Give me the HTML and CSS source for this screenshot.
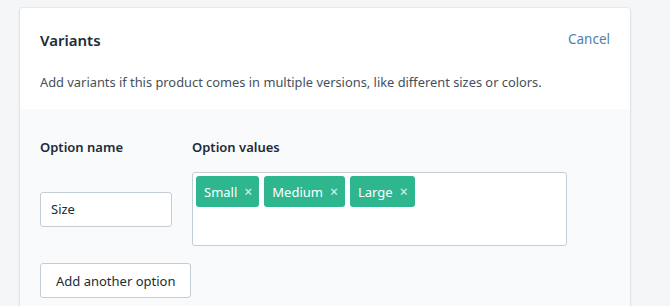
FILE: index.html
```html
<!DOCTYPE html>
<html lang="en">
<head>
    <meta charset="UTF-8">
    <title>Variants</title>
    <link rel="stylesheet" href="styles.css">
</head>
<body>
    <div class="card">
        <div class="card-header">
            <div class="title-row">
                <h2 class="title">Variants</h2>
                <a href="#" class="cancel">Cancel</a>
            </div>
            <p class="help">Add variants if this product comes in multiple versions, like different sizes or colors.</p>
        </div>
        <div class="card-section">
            <div class="options">
                <label class="label">Option name</label>
                <label class="label">Option values</label>
                <input class="name-input" type="text" value="Size">
                <div class="values-box">
                    <span class="tag">Small <span class="remove">&times;</span></span>
                    <span class="tag">Medium <span class="remove">&times;</span></span>
                    <span class="tag">Large <span class="remove">&times;</span></span>
                </div>
            </div>
            <button class="add-btn">Add another option</button>
        </div>
    </div>
</body>
</html>
```

FILE: styles.css
```css
body {
    margin: 0;
    padding: 8px 40px 0 20px;
    background-color: #f4f6f8;
    font-family: "Noto Sans", "Open Sans", sans-serif;
    font-size: 13px;
    color: #212b36;
    height: 306px;
    box-sizing: border-box;
    overflow: hidden;
}

.card {
    width: 610px;
    background-color: #fff;
    border-radius: 3px;
    box-shadow: 0 0 0 1px rgba(63, 63, 68, 0.05), 0 1px 3px rgba(63, 63, 68, 0.15);
    overflow: hidden;
}

.card-header {
    padding: 20px 20px 17px;
}

.title-row {
    display: flex;
    justify-content: space-between;
    align-items: flex-start;
}

.title {
    margin: 0;
    font-size: 15px;
    font-weight: 600;
    line-height: 24px;
}

.cancel {
    color: #4f7fae;
    text-decoration: none;
    font-size: 13.5px;
    line-height: 22px;
}

.help {
    margin: 20px 0 0;
    font-size: 12.85px;
    line-height: 20px;
    color: #454f5b;
}

.card-section {
    background-color: #f9fafb;
    padding: 28px 20px 20px;
}

.options {
    display: grid;
    grid-template-columns: 132px 375px;
    column-gap: 20px;
    row-gap: 15px;
    align-items: center;
}

.label {
    font-weight: 600;
    line-height: 20px;
}

.name-input {
    box-sizing: border-box;
    height: 35px;
    width: 132px;
    padding: 0 10px;
    border: 1px solid #c4cdd5;
    border-radius: 3px;
    font-family: inherit;
    font-size: 13px;
    color: #212b36;
    background: #fff;
}

.values-box {
    box-sizing: border-box;
    height: 74px;
    padding: 3px;
    border: 1px solid #c4cdd5;
    border-radius: 3px;
    background: #fff;
    display: flex;
    align-items: flex-start;
    gap: 5px;
}

.tag {
    display: flex;
    align-items: center;
    gap: 7px;
    height: 31px;
    padding: 0 7px 0 8px;
    background-color: #2eb68f;
    color: #fff;
    border-radius: 3px;
}

.remove {
    font-size: 14px;
    opacity: 0.85;
}

.add-btn {
    margin-top: 17px;
    height: 35px;
    padding: 0 15px;
    border: 1px solid #c4cdd5;
    border-radius: 3px;
    background: #fff;
    font-family: inherit;
    font-size: 13px;
    color: #212b36;
}
```
